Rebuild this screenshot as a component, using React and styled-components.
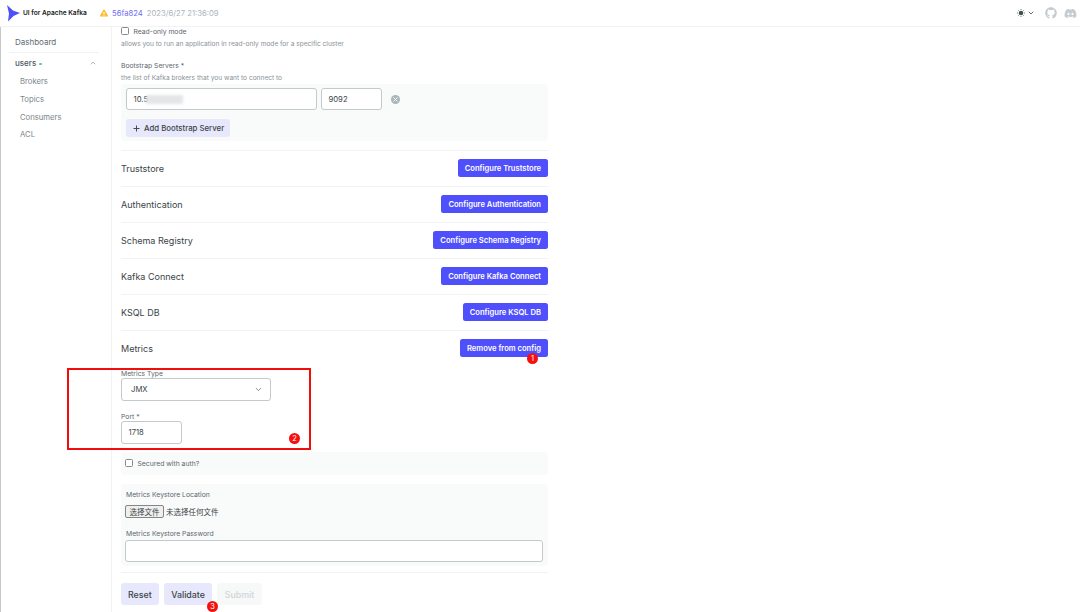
import React from "react";
import styled, { createGlobalStyle } from "styled-components";
import { FaGithub, FaDiscord, FaExclamationTriangle } from "react-icons/fa";
import { ChevronDown, ChevronUp, Plus, X } from "lucide-react";

const GlobalStyle = createGlobalStyle`
  html, body { margin: 0; padding: 0; background: #fff; }
  * { box-sizing: border-box; }
  body { font-family: Inter, "Noto Sans CJK SC", sans-serif; color: #171a1c; }
`;

const Page = styled.div`
  position: relative;
  width: 1080px;
  height: 612px;
  overflow: hidden;
  background: #fff;
`;

const Header = styled.header`
  height: 27px;
  display: flex;
  align-items: center;
  justify-content: space-between;
  border-bottom: 1px solid #f1f2f3;
  padding: 0 3px 0 7px;
`;

const Brand = styled.div`
  display: flex;
  align-items: center;
`;

const BrandName = styled.span`
  margin-left: 3px;
  font-size: 6.6px;
  font-weight: 600;
  color: #171a1c;
  width: 77px;
  white-space: nowrap;
`;

const Version = styled.div`
  display: flex;
  align-items: center;
  font-size: 7.7px;
  gap: 4px;
  color: #abb5ba;
  svg { color: #ffbb33; }
`;

const Commit = styled.span`
  color: #6f6cf5;
`;

const HeaderIcons = styled.div`
  display: flex;
  align-items: center;
  color: #c5cbce;
`;

const ThemeSwitch = styled.div`
  display: flex;
  align-items: center;
  gap: 2px;
  margin-right: 10px;
  color: #454f54;
`;

const Body = styled.div`
  display: flex;
  height: 585px;
`;

const Sidebar = styled.nav`
  width: 112px;
  flex: none;
  border-left: 1px solid #c9c9c9;
  border-right: 1px solid #f1f2f3;
  padding: 9px 12px 0 8px;
`;

const NavItem = styled.div`
  font-size: 8px;
  line-height: 12px;
  color: #5f6b72;
  padding-left: 6px;
`;

const NavDivider = styled.div`
  height: 1px;
  background: #f1f2f3;
  margin: 4px 0 4px;
`;

const ClusterRow = styled.div`
  display: flex;
  align-items: center;
  justify-content: space-between;
  height: 12px;
  padding-left: 6px;
  font-size: 8px;
  font-weight: 500;
  color: #4c575c;
  svg { color: #8a949a; margin-right: 2px; }
`;

const StatusDot = styled.span`
  display: inline-block;
  width: 2.5px;
  height: 2.5px;
  margin-left: 3px;
  border-radius: 50%;
  background: #5ad07f;
  vertical-align: middle;
`;

const SubNav = styled.div`
  display: flex;
  flex-direction: column;
  gap: 5.8px;
  margin-top: 7px;
  padding-left: 11px;
  font-size: 7.7px;
  line-height: 12px;
  color: #7b868c;
`;

const Main = styled.main`
  width: 436px;
  padding: 0 0 0 9px;
  margin-top: -1px;
`;

const CheckRow = styled.label`
  display: flex;
  align-items: center;
  gap: 5px;
  height: ${(p) => p.$height || 10}px;
  font-size: 6.8px;
  color: #5c676d;
`;

const Box = styled.span`
  width: 7.5px;
  height: 7.5px;
  flex: none;
  background: #fff;
  border: 1px solid #858a8d;
  border-radius: 1.5px;
`;

const Hint = styled.p`
  margin: 4px 0 0;
  font-size: 6.6px;
  line-height: 9px;
  color: #8a9297;
`;

const Label = styled.div`
  font-size: 6.8px;
  line-height: 9px;
  color: #5c676d;
  margin-top: ${(p) => p.$top || 0}px;
  margin-left: ${(p) => p.$indent || 0}px;
`;

const Panel = styled.div`
  margin-top: ${(p) => p.$top || 0}px;
  height: ${(p) => p.$height}px;
  padding: ${(p) => p.$padding};
  background: #f9fafa;
  border-radius: 4px;
`;

const ServerRow = styled.div`
  display: flex;
  align-items: center;
  gap: 4px;
`;

const Field = styled.div`
  position: relative;
  display: flex;
  align-items: center;
  width: ${(p) => p.$width};
  height: ${(p) => p.$height || 22}px;
  margin-top: ${(p) => p.$top || 0}px;
  padding-left: 6.5px;
  background: #fff;
  border: 1px solid #c3c9cd;
  border-radius: 3px;
  font-size: 7.7px;
  color: #3a4448;
`;

const Masked = styled.span`
  position: absolute;
  left: 19px;
  top: 6px;
  width: 37px;
  height: 9px;
  background: #e3e5e7;
  filter: blur(1.5px);
`;

const ClearIcon = styled.span`
  display: flex;
  align-items: center;
  justify-content: center;
  width: 9px;
  height: 9px;
  margin-left: 5px;
  border-radius: 50%;
  background: #abb5ba;
  color: #fff;
`;

const AddButton = styled.button`
  display: flex;
  align-items: center;
  gap: 3px;
  height: 18px;
  margin-top: 9px;
  padding: 0 6px;
  font: 500 7.8px Inter, sans-serif;
  color: #3a4448;
  background: #e8e8fc;
  border: none;
  border-radius: 3px;
`;

const SectionRow = styled.div`
  display: flex;
  align-items: center;
  justify-content: space-between;
  height: 36px;
  border-top: 1px solid #f1f2f3;
  font-size: 9px;
  color: #3a4448;
`;

const Sections = styled.div`
  margin-top: 8.5px;
`;

const PrimaryButton = styled.button`
  height: 18px;
  padding: 0 7px;
  font: 600 7.6px Inter, sans-serif;
  color: #fff;
  background: #4f4ffb;
  border: none;
  border-radius: 2.5px;
  white-space: nowrap;
`;

const SelectBox = styled(Field)`
  justify-content: space-between;
  padding: 0 7px 0 9px;
  svg { color: #5f6b72; }
`;

const FileRow = styled.div`
  display: flex;
  align-items: center;
  gap: 2px;
  margin-top: 6px;
  font-size: 7.5px;
  color: #3a4448;
`;

const FileButton = styled.span`
  display: flex;
  align-items: center;
  justify-content: center;
  width: 39px;
  height: 13px;
  background: #efefef;
  border: 1px solid #858585;
  border-radius: 2px;
`;

const FormDivider = styled.div`
  height: 1px;
  margin-top: 6.5px;
  background: #f1f2f3;
`;

const FormActions = styled.div`
  display: flex;
  gap: 5px;
  margin-top: 10px;
`;

const ActionButton = styled.button`
  height: 22px;
  padding: 0 ${(p) => p.$pad}px;
  font: 500 8.8px Inter, sans-serif;
  color: ${(p) => (p.disabled ? "#d0d5d8" : "#3a4448")};
  background: ${(p) => (p.disabled ? "#f7f8f8" : "#e8e8fc")};
  border: none;
  border-radius: 3px;
`;

// red marks somebody drew over the screenshot
const MarkBox = styled.div`
  position: absolute;
  left: 67px;
  top: 368px;
  width: 244px;
  height: 82px;
  border: 2px solid #f20d0d;
`;

const MarkDot = styled.span`
  position: absolute;
  left: ${(p) => p.$left}px;
  top: ${(p) => p.$top}px;
  width: 11px;
  height: 11px;
  display: flex;
  align-items: center;
  justify-content: center;
  border-radius: 50%;
  background: #f50f0f;
  color: #fff;
  font-size: 7.5px;
`;

const sections = [
  ["Truststore", "Configure Truststore"],
  ["Authentication", "Configure Authentication"],
  ["Schema Registry", "Configure Schema Registry"],
  ["Kafka Connect", "Configure Kafka Connect"],
  ["KSQL DB", "Configure KSQL DB"],
  ["Metrics", "Remove from config"],
];

function Logo() {
  return (
    <svg width="13" height="17" viewBox="0 0 13 17">
      <path d="M0 0 L6 5.5 L13 8 L6.5 11 L1 16.5 L2 8.5 Z" fill="#4f4ffb" />
    </svg>
  );
}

function SunIcon() {
  return (
    <svg width="8" height="8" viewBox="0 0 8 8">
      <circle cx="4" cy="4" r="2.3" fill="#454f54" />
      <path
        d="M4 0v1M4 7v1M0 4h1M7 4h1M1.2 1.2l.7.7M6.1 6.1l.7.7M1.2 6.8l.7-.7M6.1 1.9l.7-.7"
        stroke="#454f54"
        strokeWidth="0.7"
      />
    </svg>
  );
}

export default function App() {
  return (
    <Page>
      <GlobalStyle />
      <Header>
        <Brand>
          <Logo />
          <BrandName>UI for Apache Kafka</BrandName>
          <Version>
            <FaExclamationTriangle size={8} />
            <Commit>56fa824</Commit>
            <span>2023/6/27 21:36:09</span>
          </Version>
        </Brand>
        <HeaderIcons>
          <ThemeSwitch>
            <SunIcon />
            <ChevronDown size={8} strokeWidth={2.5} />
          </ThemeSwitch>
          <FaGithub size={12} />
          <FaDiscord size={13} style={{ marginLeft: 7 }} />
        </HeaderIcons>
      </Header>
      <Body>
        <Sidebar>
          <NavItem>Dashboard</NavItem>
          <NavDivider />
          <ClusterRow>
            <span>
              users<StatusDot />
            </span>
            <ChevronUp size={8} />
          </ClusterRow>
          <SubNav>
            <span>Brokers</span>
            <span>Topics</span>
            <span>Consumers</span>
            <span>ACL</span>
          </SubNav>
        </Sidebar>
        <Main>
          <CheckRow>
            <Box />
            Read-only mode
          </CheckRow>
          <Hint>allows you to run an application in read-only mode for a specific cluster</Hint>
          <Label $top={11.5}>Bootstrap Servers *</Label>
          <Hint>the list of Kafka brokers that you want to connect to</Hint>
          <Panel $top={1.5} $height={57} $padding="4px 5px">
            <ServerRow>
              <Field $width="191px">
                10.5
                <Masked />
              </Field>
              <Field $width="61px">9092</Field>
              <ClearIcon>
                <X size={7} strokeWidth={3} />
              </ClearIcon>
            </ServerRow>
            <AddButton>
              <Plus size={9} strokeWidth={2.5} />
              Add Bootstrap Server
            </AddButton>
          </Panel>
          <Sections>
            {sections.map(([title, action]) => (
              <SectionRow key={title}>
                {title}
                <PrimaryButton>{action}</PrimaryButton>
              </SectionRow>
            ))}
          </Sections>
          <Label $top={3}>Metrics Type</Label>
          <SelectBox $width="150px" $height={23}>
            JMX
            <ChevronDown size={9} />
          </SelectBox>
          <Label $top={11}>Port *</Label>
          <Field $width="61px" $height={23}>1718</Field>
          <Panel $top={8} $height={23} $padding="0 4px">
            <CheckRow $height={23}>
              <Box />
              Secured with auth?
            </CheckRow>
          </Panel>
          <Panel $top={9} $height={82} $padding="6px 4px">
            <Label $indent={1}>Metrics Keystore Location</Label>
            <FileRow>
              <FileButton>选择文件</FileButton>
              未选择任何文件
            </FileRow>
            <Label $top={11} $indent={1}>Metrics Keystore Password</Label>
            <Field $width="418px" $height={22} $top={2} />
          </Panel>
          <FormDivider />
          <FormActions>
            <ActionButton $pad={7}>Reset</ActionButton>
            <ActionButton $pad={7.5}>Validate</ActionButton>
            <ActionButton $pad={7.5} disabled>Submit</ActionButton>
          </FormActions>
        </Main>
      </Body>
      <MarkBox />
      <MarkDot $left={527} $top={353}>1</MarkDot>
      <MarkDot $left={289} $top={433}>2</MarkDot>
      <MarkDot $left={207} $top={601}>3</MarkDot>
    </Page>
  );
}
